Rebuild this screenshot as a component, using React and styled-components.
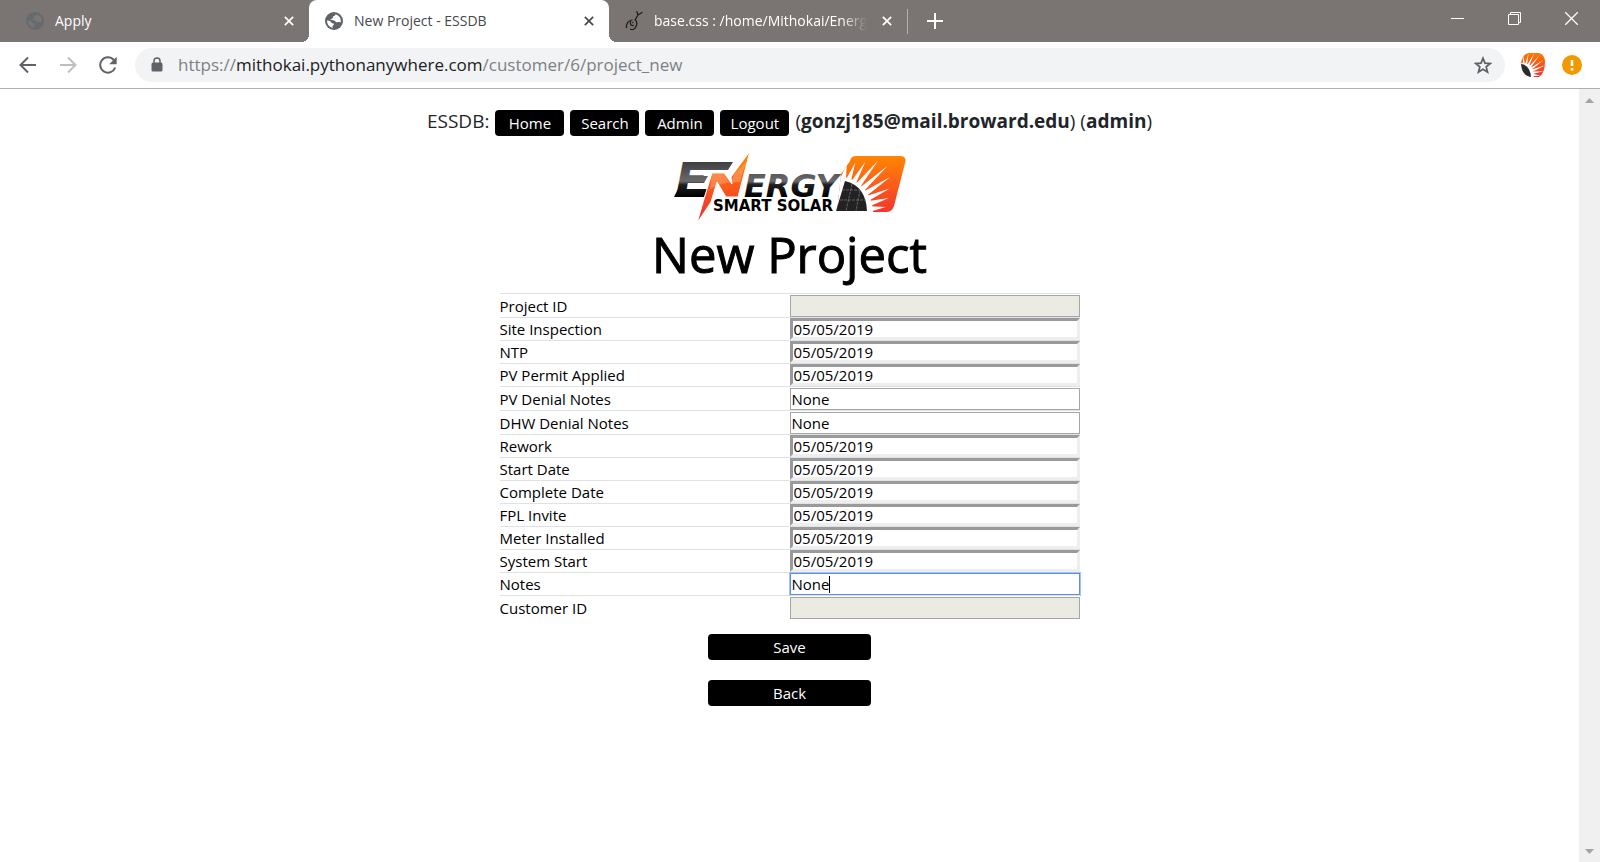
import React from "react";
import styled, { createGlobalStyle, css } from "styled-components";

const GlobalStyle = createGlobalStyle`
  *, *::before, *::after { box-sizing: border-box; }
  body {
    margin: 0;
    background: #fff;
    color: #000;
    font-family: "Open Sans", "Noto Sans", sans-serif;
    font-size: 15px;
  }
  button, input { font: inherit; color: inherit; }
`;

const Window = styled.div`
  display: flex;
  flex-direction: column;
  min-height: 100vh;
`;

const TabStrip = styled.header`
  display: flex;
  height: 42px;
  background: #7a7473;
  color: #fff;
`;

const Tab = styled.div`
  position: relative;
  display: flex;
  align-items: center;
  gap: 11px;
  width: ${(p) => p.$width}px;
  padding: 0 11px 0 ${(p) => p.$inset}px;
  font-size: 14px;
  ${(p) =>
    p.$active &&
    css`
      background: #fff;
      color: #45494d;
      border-radius: 8px 8px 0 0;
      &::before,
      &::after {
        content: "";
        position: absolute;
        bottom: 0;
        width: 8px;
        height: 8px;
      }
      &::before {
        right: 100%;
        background: radial-gradient(circle at 0 0, transparent 8px, #fff 8px);
      }
      &::after {
        left: 100%;
        background: radial-gradient(circle at 100% 0, transparent 8px, #fff 8px);
      }
    `}
`;

const TabTitle = styled.span`
  flex: 1;
  min-width: 0;
  padding-bottom: 2px;
  overflow: hidden;
  white-space: nowrap;
  ${(p) => p.$fade && css`mask-image: linear-gradient(to right, #000 88%, transparent);`}
`;

const IconButton = styled.button`
  display: flex;
  align-items: center;
  justify-content: center;
  width: ${(p) => p.$size || 18}px;
  height: ${(p) => p.$size || 18}px;
  padding: 0;
  border: 0;
  background: none;
  color: ${(p) => p.$color || "inherit"};
`;

const Separator = styled.span`
  align-self: center;
  width: 1px;
  height: 25px;
  margin-right: 13px;
  background: #b5b0af;
`;

const NewTab = styled.div`
  display: flex;
  align-items: center;
  flex: 1;
`;

const WindowControls = styled.div`
  display: flex;
  align-items: flex-start;
  padding-top: 4px;
  gap: 29px;
  margin-right: 15px;
`;

const Toolbar = styled.div`
  display: flex;
  align-items: center;
  height: 47px;
  padding: 0 18px 0 14px;
  border-bottom: 1px solid #b0b0b0;
`;

const NavIcons = styled.div`
  display: flex;
  gap: 12px;
  margin-right: 13px;
`;

const AddressBar = styled.div`
  display: flex;
  align-items: center;
  flex: 1;
  height: 34px;
  padding: 0 8px 0 15px;
  border-radius: 17px;
  background: #f1f3f4;
`;

const Address = styled.div`
  flex: 1;
  margin-left: 14px;
  font-size: 17px;
  line-height: 24px;
  color: #7d8185;
  outline: none;
`;

const Host = styled.span`
  color: #202124;
`;

const Extensions = styled.div`
  display: flex;
  align-items: center;
  gap: 15px;
  margin-left: 14px;
`;

const Viewport = styled.div`
  display: flex;
  flex: 1;
`;

const Page = styled.main`
  display: flex;
  flex-direction: column;
  align-items: center;
  flex: 1;
  padding: 21px 16px 24px;
`;

const ScrollTrack = styled.div`
  display: flex;
  flex-direction: column;
  align-items: center;
  justify-content: space-between;
  width: 21px;
  padding: 9px 0 8px;
  background: #f0f0f0;
`;

const SiteNav = styled.nav`
  display: flex;
  align-items: center;
  gap: 6px;
  height: 26px;
  font-size: 19px;
  line-height: 24px;
  color: #212529;
`;

const NavText = styled.span`
  padding-bottom: 4px;
`;

const User = styled.b`
  font-weight: 700;
`;

const BlackButton = styled.button`
  width: ${(p) => (p.$wide ? 163 : 69)}px;
  height: 26px;
  padding: 0;
  border: 0;
  border-radius: 4px;
  background: #000;
  color: #fff;
  font-size: 15px;
  line-height: 26px;
`;

const LogoLink = styled.a`
  display: block;
  height: 76px;
  margin-top: 14px;
`;

const Title = styled.h1`
  margin: 0 0 11px;
  font-size: 49px;
  font-weight: 500;
  line-height: 56px;
  -webkit-text-stroke: 1px #000;
`;

const ProjectForm = styled.form`
  display: flex;
  flex-direction: column;
  align-items: center;
  width: 100%;
`;

const FieldTable = styled.table`
  width: 100%;
  max-width: 580px;
  table-layout: fixed;
  border-spacing: 0;
  margin-bottom: 15px;
`;

const FieldRow = styled.tr`
  height: ${(p) => (p.$kind === "date" || p.$kind === "active" ? 23 : 24)}px;
`;

const LabelCell = styled.th`
  padding: 0;
  border-top: 1px solid #dee2e6;
  font-weight: 400;
  text-align: left;
  line-height: 22px;
`;

const InputCell = styled.td`
  position: relative;
  padding: 0;
  border-top: 1px solid #dee2e6;
  vertical-align: bottom;
`;

const Field = styled.input`
  display: block;
  width: 100%;
  height: 22px;
  padding: 0 1px;
  line-height: 20px;
  border: 1px solid #a6a6a6;
  border-radius: 0;
  background: #fff;
  outline: none;
  ${(p) =>
    p.$kind === "date" &&
    css`
      line-height: 16px;
      border: 3px solid;
      border-color: #9a9a9a #eee #eee #9a9a9a;
    `}
  ${(p) => p.$kind === "readonly" && css`background: #ebebe4;`}
  ${(p) =>
    p.$kind === "active" &&
    css`
      border-color: #5e8fe6;
      box-shadow: 0 0 0 1px #a3c2f5;
    `}
`;

const Caret = styled.span`
  position: absolute;
  left: 39px;
  top: 3px;
  width: 1px;
  height: 17px;
  background: #000;
`;

const Actions = styled.div`
  display: flex;
  flex-direction: column;
  gap: 20px;
`;

const FIELDS = [
  ["Project ID", "readonly", ""],
  ["Site Inspection", "date", "05/05/2019"],
  ["NTP", "date", "05/05/2019"],
  ["PV Permit Applied", "date", "05/05/2019"],
  ["PV Denial Notes", "text", "None"],
  ["DHW Denial Notes", "text", "None"],
  ["Rework", "date", "05/05/2019"],
  ["Start Date", "date", "05/05/2019"],
  ["Complete Date", "date", "05/05/2019"],
  ["FPL Invite", "date", "05/05/2019"],
  ["Meter Installed", "date", "05/05/2019"],
  ["System Start", "date", "05/05/2019"],
  ["Notes", "active", "None"],
  ["Customer ID", "readonly", ""],
];

const Globe = ({ land, sea }) => (
  <svg width="18" height="18" viewBox="0 0 18 18" aria-hidden="true">
    <circle cx="9" cy="9" r="9" fill={land} />
    <path
      fill={sea}
      d="M10.500 2.200C10.200 3.600 9.200 4.200 8 4.300c-.3 1.200.4 1.800-.6 2.300-.9.500-1.900.4-2.600 1 .6.900 3.200.3 4.500.9 1.300.500 1 1.700 2.300 1.800 1.100.1 2.600-.4 3.400-.1.500.2.600.500.600.900A7 7 0 0 0 10.500 2.200ZM2 8.500c1.500 0 2.600.2 3.500.9.900.6.700 1.500 1.800 1.800 1 .3 1.700.2 1.700 1.100 0 .8-1.300 1-1.500 1.700-.1.500.1 1.200.3 1.800C4.500 15.400 2 12.500 2 8.500Z"
    />
  </svg>
);

const Snake = () => (
  <svg width="18" height="22" viewBox="0 0 18 22" fill="none" stroke="#1d1d1d" strokeWidth="1.300" strokeLinecap="round" aria-hidden="true">
    <path d="M1.500 17.500C1 13.500 3.500 11 7 10M11 10.500c1.500 2.500.8 6.500-2 8.500-1.200.8-2.600.8-3.500.3M5.500 12c-.5 2.500.8 4 2.800 3.500M10 10l3-5M13 5l-1.200-3.500M13 5l4-2.500M7.800 12.500h.2" />
  </svg>
);

const Cross = ({ size = 10, weight = 2 }) => (
  <svg width={size} height={size} viewBox="0 0 12 12" stroke="currentColor" strokeWidth={weight} aria-hidden="true">
    <path d="m1 1 10 10M11 1 1 11" />
  </svg>
);

const Arrow = ({ flip }) => (
  <svg width="18" height="18" viewBox="0 0 18 18" fill="none" stroke="currentColor" strokeWidth="2" aria-hidden="true">
    <path d={flip ? "M1 9h15M9 1.500 16.500 9 9 16.500" : "M17 9H2M9 1.500 1.500 9 9 16.500"} />
  </svg>
);

const rays = (cx, cy, inner, outer, count, from, to, half) =>
  Array.from({ length: count }, (_, i) => {
    const a = from + ((to - from) * i) / (count - 1);
    const pt = (r, t) => `${(cx + r * Math.cos(t)).toFixed(1)} ${(cy - r * Math.sin(t)).toFixed(1)}`;
    return `M${pt(inner, a - half)}L${pt(outer(i), a)}L${pt(inner, a + half)}Z`;
  }).join("");

const Logo = () => (
  <svg width="244" height="76" viewBox="668 150 244 76" role="img" aria-label="Energy Smart Solar">
    <defs>
      <linearGradient id="steel" gradientUnits="userSpaceOnUse" x1="0" y1="162" x2="0" y2="197">
        <stop offset="0" stopColor="#3f3f41" />
        <stop offset=".55" stopColor="#6a6a6c" />
        <stop offset=".65" stopColor="#202020" />
        <stop offset="1" stopColor="#000" />
      </linearGradient>
      <linearGradient id="flame" gradientUnits="userSpaceOnUse" x1="0" y1="153" x2="0" y2="220">
        <stop offset="0" stopColor="#ff8a00" />
        <stop offset=".5" stopColor="#fb5a1c" />
        <stop offset="1" stopColor="#ef2b33" />
      </linearGradient>
      <clipPath id="tile">
        <path d="M856 156h44q7 0 5 7l-11 43q-2 6-8 6h-49l4-38 9-13q1-5 6-5Z" />
      </clipPath>
    </defs>
    <g fill="url(#steel)" fontFamily="DejaVu Sans" fontWeight="bold" fontStyle="italic">
      <text x="675" y="197" fontSize="48">E</text>
      <text x="744" y="197" fontSize="32">ERGY</text>
    </g>
    <path fill="url(#steel)" d="M688 162h45l-5 8h-42zM678 189h29l-3 8h-30zM684 176h24l-4 7h-22z" />
    <path
      fill="url(#flame)"
      stroke="#fff"
      strokeWidth="1"
      d="M712 173h12l8 11-1-7 19-26-12 46h-12l-9-15-6 20-14 21 7-24Z"
    />
    <path fill="#fff" opacity=".22" d="M712 174h11l8 10 3-10 12-12-6 20q-16-1-30 7Z" />
    <text x="713" y="211" fontSize="15" fontFamily="DejaVu Sans" fontWeight="bold">SMART SOLAR</text>
    <g clipPath="url(#tile)">
      <rect x="836" y="155" width="72" height="58" fill="url(#flame)" />
      <circle cx="836" cy="213" r="37" fill="#fff" />
      <path fill="#fff" d={rays(836, 213, 35, (i) => [50, 55, 59, 65, 70, 67, 59, 54, 52][i], 9, 0.12, 1.36, 0.075)} />
    </g>
    <path fill="#222" d="M845 181q21 5 22 30h-31Z" />
    <path fill="none" stroke="#8a8a8a" strokeWidth=".6" strokeDasharray="3 1" d="M842 190h17M840 200h26M852 184l-6 27M860 190l-4 21" />
  </svg>
);

const SolarBadge = () => (
  <svg width="26" height="26" viewBox="0 0 26 26" aria-hidden="true">
    <defs>
      <linearGradient id="sun" x1="0" y1="0" x2="0" y2="1">
        <stop offset="0" stopColor="#ff7a00" />
        <stop offset="1" stopColor="#ee2f35" />
      </linearGradient>
    </defs>
    <path fill="url(#sun)" d="M1 11Q3 1 9 1h10q6 2 6 9 0 11-6 15h-7L1 12Z" />
    <path fill="#fff" d={rays(4, 22, 10, (i) => [17, 20, 23, 24, 24, 23, 21, 18][i], 8, -0.1, 1.6, 0.1)} />
    <circle cx="3" cy="22" r="11" fill="#fff" />
    <path fill="#2b2b2b" d="M1 12q9 1 10 13-9-1-10-13Z" />
  </svg>
);

const Triangle = ({ down }) => (
  <svg width="9" height="5" viewBox="0 0 9 5" aria-hidden="true">
    <path fill="#a3a3a3" d={down ? "M0 0h9L4.500 5Z" : "M0 5h9L4.500 0Z"} />
  </svg>
);

function BrowserTabs() {
  return (
    <TabStrip>
      <Tab $width={309} $inset={26}>
        <Globe land="#656a6e" sea="#7a7473" />
        <TabTitle>Apply</TabTitle>
        <IconButton aria-label="Close Apply"><Cross /></IconButton>
      </Tab>
      <Tab $width={300} $inset={16} $active>
        <Globe land="#5f6368" sea="#fff" />
        <TabTitle>New Project - ESSDB</TabTitle>
        <IconButton aria-label="Close New Project"><Cross /></IconButton>
      </Tab>
      <Tab $width={298} $inset={16}>
        <Snake />
        <TabTitle $fade>base.css : /home/Mithokai/Energy</TabTitle>
        <IconButton aria-label="Close base.css"><Cross /></IconButton>
      </Tab>
      <NewTab>
        <Separator />
        <IconButton $size={28} aria-label="New tab">
          <svg width="16" height="16" viewBox="0 0 16 16" stroke="currentColor" strokeWidth="2"><path d="M8 0v16M0 8h16" /></svg>
        </IconButton>
      </NewTab>
      <WindowControls>
        <IconButton $size={28} aria-label="Minimize">
          <svg width="13" height="13" viewBox="0 0 13 13" stroke="currentColor"><path d="M0 6.500h13" /></svg>
        </IconButton>
        <IconButton $size={28} aria-label="Restore">
          <svg width="13" height="13" viewBox="0 0 13 13" fill="none" stroke="currentColor"><path d="M.5 2.500h10v10H.5zM2.500 2.500v-2h10v10h-2" /></svg>
        </IconButton>
        <IconButton $size={28} aria-label="Close window"><Cross size={15} weight={1} /></IconButton>
      </WindowControls>
    </TabStrip>
  );
}

function BrowserToolbar() {
  return (
    <Toolbar>
      <NavIcons>
        <IconButton $size={28} $color="#5f6368" aria-label="Back one page"><Arrow /></IconButton>
        <IconButton $size={28} $color="#bcbec0" aria-label="Forward one page"><Arrow flip /></IconButton>
        <IconButton $size={28} $color="#5f6368" aria-label="Reload">
          <svg width="18" height="18" viewBox="0 0 18 18" aria-hidden="true">
            <path d="M16.200 11.500A7.700 7.700 0 1 1 14.800 4" fill="none" stroke="currentColor" strokeWidth="2" />
            <path d="M17.700.8v7.500h-7.500Z" fill="currentColor" />
          </svg>
        </IconButton>
      </NavIcons>
      <AddressBar>
        <svg width="14" height="16" viewBox="0 0 14 16" aria-hidden="true">
          <rect x="1.500" y="5.500" width="11" height="9" rx="1.500" fill="#5f6368" />
          <path d="M4 6V4a3 3 0 0 1 6 0v2" fill="none" stroke="#5f6368" strokeWidth="1.500" />
        </svg>
        <Address role="textbox" aria-label="Address" contentEditable suppressContentEditableWarning spellCheck={false}>
          https://<Host>mithokai.pythonanywhere.com</Host>/customer/6/project_new
        </Address>
        <IconButton $size={28} $color="#5f6368" aria-label="Bookmark this page">
          <svg width="18" height="18" viewBox="0 0 18 18" fill="none" stroke="currentColor" strokeWidth="1.800" aria-hidden="true">
            <path d="m9 2.300 2 4.800 5.200.4-4 3.400 1.300 5.100L9 13.200 4.500 16l1.300-5.100-4-3.400L7 7.100Z" />
          </svg>
        </IconButton>
      </AddressBar>
      <Extensions>
        <IconButton $size={28} aria-label="Profile"><SolarBadge /></IconButton>
        <IconButton $size={20} aria-label="Update available">
          <svg width="20" height="20" viewBox="0 0 20 20" aria-hidden="true">
            <circle cx="10" cy="10" r="10" fill="#f29900" />
            <path d="M10 5v6M10 13v2.500" stroke="#fff" strokeWidth="2.500" />
          </svg>
        </IconButton>
      </Extensions>
    </Toolbar>
  );
}

export default function App() {
  return (
    <Window>
      <GlobalStyle />
      <BrowserTabs />
      <BrowserToolbar />
      <Viewport>
        <Page>
          <SiteNav>
            <NavText>ESSDB:</NavText>
            {["Home", "Search", "Admin", "Logout"].map((name) => (
              <BlackButton key={name} type="button">{name}</BlackButton>
            ))}
            <NavText>(<User>gonzj185@mail.broward.edu</User>) (<User>admin</User>)</NavText>
          </SiteNav>
          <LogoLink href="#home"><Logo /></LogoLink>
          <Title>New Project</Title>
          <ProjectForm onSubmit={(e) => e.preventDefault()}>
            <FieldTable>
              <tbody>
                {FIELDS.map(([label, kind, value]) => {
                  const id = label.toLowerCase().replaceAll(" ", "-");
                  return (
                    <FieldRow key={id} $kind={kind}>
                      <LabelCell scope="row"><label htmlFor={id}>{label}</label></LabelCell>
                      <InputCell>
                        <Field id={id} type="text" $kind={kind} defaultValue={value} readOnly={kind === "readonly"} />
                        {kind === "active" && <Caret />}
                      </InputCell>
                    </FieldRow>
                  );
                })}
              </tbody>
            </FieldTable>
            <Actions>
              <BlackButton $wide type="submit">Save</BlackButton>
              <BlackButton $wide type="button">Back</BlackButton>
            </Actions>
          </ProjectForm>
        </Page>
        <ScrollTrack>
          <Triangle />
          <Triangle down />
        </ScrollTrack>
      </Viewport>
    </Window>
  );
}
